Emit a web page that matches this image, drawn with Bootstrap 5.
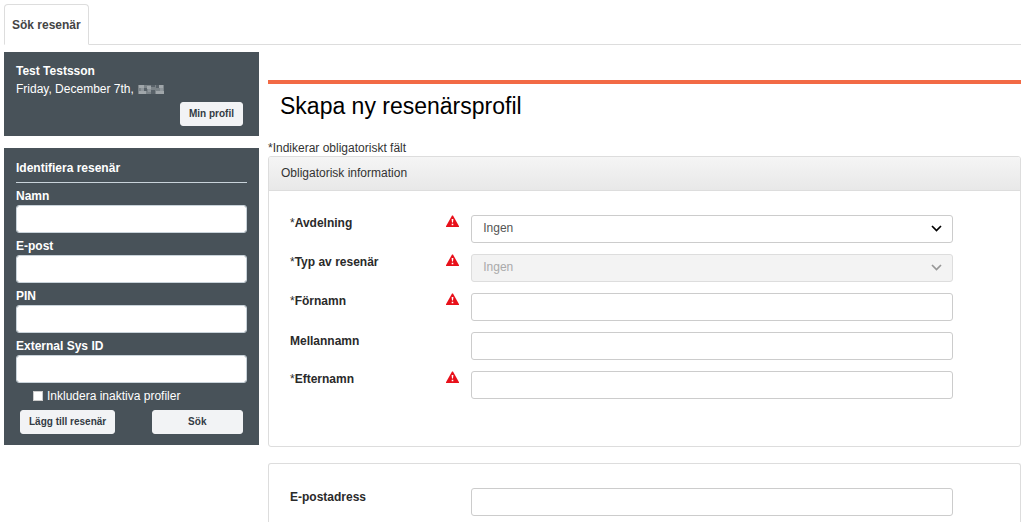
<!DOCTYPE html>
<html lang="sv">
<head>
<meta charset="utf-8">
<meta name="viewport" content="width=device-width, initial-scale=1">
<title>Skapa ny resenärsprofil</title>
<link href="https://cdn.jsdelivr.net/npm/bootstrap@5.3.0/dist/css/bootstrap.min.css" rel="stylesheet">
<style>
  body { font-family: "Liberation Sans", Arial, sans-serif; font-size: 12px; line-height: 18px; color: #333; background: #fff; }
  .page { padding: 4px 3px 0 4px; }
  .nav-tabs { --bs-nav-tabs-border-color: #ddd; --bs-nav-tabs-link-active-color: #444; --bs-nav-tabs-link-active-border-color: #ddd #ddd #fff; --bs-nav-tabs-border-radius: 4px; margin-bottom: 7px; }
  .nav-tabs .nav-link { padding: 11px 7px 10px; font-weight: 700; }
  .layout { display: grid; grid-template-columns: 255fr 753fr; column-gap: 9px; flex: 1; }
  .side-panel { background: #485259; color: #fff; padding: 10px 12px; }
  .side-panel + .side-panel { margin-top: 12px; padding: 11px 12px; }
  .side-title { font-size: 12px; line-height: 18px; font-weight: 700; margin: 0; }
  .side-rule { border-bottom: 1px solid #c9d3da; padding-bottom: 5px; margin-bottom: 5px; }
  .side-field { margin-bottom: 5px; }
  .side-field label { display: block; line-height: 17px; font-weight: 700; }
  .form-control, .form-select { height: 28px; min-height: 28px; font-size: 12px; line-height: 18px; border-radius: 3px; border-color: #ccc; padding: 4px 11px; color: #555; }
  .side-field .form-control { border-color: #c9d3da; }
  .btn-soft { --bs-btn-bg: #f2f3f5; --bs-btn-color: #333b44; --bs-btn-border-color: #f2f3f5; --bs-btn-hover-bg: #fff; font-size: 10px; line-height: 14px; font-weight: 700; padding: 4px 8px; border-radius: 3px; }
  .btn-find { width: 41%; }
  .inactive { gap: 4px; padding-left: 17px; margin-bottom: 6px; line-height: 16px; }
  .inactive input { width: 10px; height: 10px; margin: 0; appearance: none; background: #fff; border: 1px solid #ccc; }
  .inactive input:checked { background: #2f7fd0; }
  .title-bar { border-top: 4px solid #f26a45; margin-top: 28px; padding: 8px 12px 20px; }
  .title-bar h1 { font-size: 23px; line-height: 28px; font-weight: 400; color: #000; margin: 0; }
  .note { line-height: 16px; margin: 0; }
  .card { --bs-card-border-color: #ddd; --bs-card-border-radius: 3px; --bs-card-inner-border-radius: 2px; }
  .card-header { background: linear-gradient(#f5f5f5, #e8e8e8); padding: 8px 12px; line-height: 17px; border-color: #ddd; }
  .card-body { padding: 24px 67px 47px 21px; }
  .fields { display: grid; row-gap: 11px; }
  .field-line { display: grid; grid-template-columns: 26fr 74fr; column-gap: 12px; }
  .field-line label { font-weight: 700; color: #2a2a2a; line-height: 16px; }
  .field-line label span { font-weight: 400; }
  .form-select { --bs-form-select-bg-img: none; background-image: none; padding: 3px 32px 5px 11px; }
  .form-select:disabled { background: #f3f3f3; color: #aaa; border-color: #ddd; }
  .chevron { position: absolute; right: 11px; top: 9px; pointer-events: none; }
  .card-more { margin-top: 16px; border-bottom: 0; border-bottom-left-radius: 0; border-bottom-right-radius: 0; }
  .card-more .card-body { padding-bottom: 7px; }
</style>
</head>
<body>
<svg class="d-none" aria-hidden="true">
  <symbol id="warn" viewBox="0 0 13 12"><path d="M6 .5h1L13 11.200V12H0V11.200Z" fill="#e8101a"/><path d="M5.600 4h1.800L7 7.600H6zM5.700 8.700h1.600v1.500H5.700z" fill="#fff"/></symbol>
  <symbol id="chev" viewBox="0 0 11 9"><path d="M1 2 5.500 6.500 10 2" fill="none" stroke="currentColor" stroke-width="1.700"/></symbol>
</svg>
<div class="page d-flex flex-column min-vh-100">
  <ul class="nav nav-tabs">
    <li class="nav-item"><a class="nav-link active" aria-current="page" href="#">Sök resenär</a></li>
  </ul>
  <div class="layout">
    <aside>
      <section class="side-panel">
        <h2 class="side-title">Test Testsson</h2>
        <div class="d-flex align-items-center">Friday, December 7th,
          <svg class="ms-1" width="26" height="11" aria-hidden="true" shape-rendering="crispEdges">
            <path d="M0 1h26v9H0z" fill="#7b8388"/>
            <path d="M1 1h5v3H1zM9 2h4v3H9zM21 1h4v3h-4zM1 7h7v3H1zM18 7h8v3h-8z" fill="#a0a6aa"/>
            <path d="M6 4h3v3H6zM13 6h4v4h-4zM18 1h3v3h-3zM13 1h4v2h-4z" fill="#596269"/>
            <path d="M3 4h3v3H3zM10 5h3v3h-3zM22 4h3v3h-3z" fill="#8e959a"/>
          </svg>
        </div>
        <div class="d-flex justify-content-end mt-1 px-1"><button type="button" class="btn btn-soft">Min profil</button></div>
      </section>
      <form class="side-panel">
        <h2 class="side-title side-rule">Identifiera resenär</h2>
        <div class="side-field"><label for="namn">Namn</label><input class="form-control" id="namn" type="text"></div>
        <div class="side-field"><label for="epost">E-post</label><input class="form-control" id="epost" type="text"></div>
        <div class="side-field"><label for="pin">PIN</label><input class="form-control" id="pin" type="text"></div>
        <div class="side-field"><label for="sysid">External Sys ID</label><input class="form-control" id="sysid" type="text"></div>
        <div class="inactive d-flex align-items-center"><input type="checkbox" id="inaktiva"><label for="inaktiva">Inkludera inaktiva profiler</label></div>
        <div class="d-flex justify-content-between px-1">
          <button type="button" class="btn btn-soft">Lägg till resenär</button>
          <button type="submit" class="btn btn-soft btn-find">Sök</button>
        </div>
      </form>
    </aside>
    <main class="d-flex flex-column">
      <div class="title-bar"><h1>Skapa ny resenärsprofil</h1></div>
      <p class="note">*Indikerar obligatoriskt fält</p>
      <section class="card">
        <div class="card-header">Obligatorisk information</div>
        <div class="card-body fields">
          <div class="field-line">
            <div class="d-flex justify-content-between"><label for="avd"><span>*</span>Avdelning</label><svg width="13" height="12" role="img" aria-label="Obligatoriskt"><use href="#warn"/></svg></div>
            <div class="position-relative"><select class="form-select" id="avd"><option>Ingen</option></select><svg class="chevron text-black" width="11" height="9" aria-hidden="true"><use href="#chev"/></svg></div>
          </div>
          <div class="field-line">
            <div class="d-flex justify-content-between"><label for="typ"><span>*</span>Typ av resenär</label><svg width="13" height="12" role="img" aria-label="Obligatoriskt"><use href="#warn"/></svg></div>
            <div class="position-relative text-black-50"><select class="form-select" id="typ" disabled><option>Ingen</option></select><svg class="chevron opacity-75" width="11" height="9" aria-hidden="true"><use href="#chev"/></svg></div>
          </div>
          <div class="field-line">
            <div class="d-flex justify-content-between"><label for="fornamn"><span>*</span>Förnamn</label><svg width="13" height="12" role="img" aria-label="Obligatoriskt"><use href="#warn"/></svg></div>
            <input class="form-control" id="fornamn" type="text">
          </div>
          <div class="field-line">
            <div><label for="mellan">Mellannamn</label></div>
            <input class="form-control" id="mellan" type="text">
          </div>
          <div class="field-line">
            <div class="d-flex justify-content-between"><label for="efternamn"><span>*</span>Efternamn</label><svg width="13" height="12" role="img" aria-label="Obligatoriskt"><use href="#warn"/></svg></div>
            <input class="form-control" id="efternamn" type="text">
          </div>
        </div>
      </section>
      <section class="card card-more flex-grow-1">
        <div class="card-body">
          <div class="field-line">
            <div><label for="epostadress">E-postadress</label></div>
            <input class="form-control" id="epostadress" type="email">
          </div>
        </div>
      </section>
    </main>
  </div>
</div>
<script src="https://cdn.jsdelivr.net/npm/bootstrap@5.3.0/dist/js/bootstrap.bundle.min.js"></script>
</body>
</html>
